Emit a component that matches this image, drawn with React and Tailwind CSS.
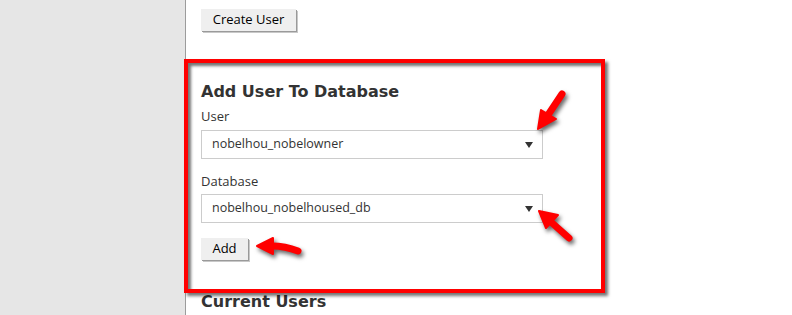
import React from "react";

const font = { fontFamily: '"Open Sans", "DejaVu Sans", sans-serif' };
const headFont = { fontFamily: '"DejaVu Sans", Verdana, sans-serif' };

const Select = ({ value }) => (
  <div className="flex h-[29px] w-[342px] items-center justify-between border border-[#cccccc] bg-white pl-[10px] pr-[9px] text-[12.5px] text-[#333]">
    <span>{value}</span>
    <svg width="8" height="6" viewBox="0 0 8 6" className="mt-[1px]">
      <path d="M0 0h8L4 6z" fill="#333" />
    </svg>
  </div>
);

const Button = ({ children, className = "" }) => (
  <button
    className={`h-[22px] border-0 bg-[#efefef] text-[13px] text-black shadow-[1px_1px_0_#9a9a9a,2px_2px_0_#c8c8c8] ${className}`}
  >
    {children}
  </button>
);

// annotation arrows drawn over the page
const Arrows = () => (
  <svg
    width="792"
    height="315"
    className="pointer-events-none absolute left-0 top-0 drop-shadow-[2px_3px_2px_rgba(0,0,0,0.6)]"
  >
    <g fill="#ff0000" stroke="#ff0000" strokeLinecap="round" strokeLinejoin="round">
      {/* user select */}
      <path d="M562 94 L548 115" strokeWidth="7" fill="none" />
      <path d="M538 129 L541 110 L556 119 Z" strokeWidth="2" />
      {/* database select */}
      <path d="M569 238 L551 222" strokeWidth="7" fill="none" />
      <path d="M539 211 L558 215 L546 228 Z" strokeWidth="2" />
      {/* add button */}
      <path d="M298 251 Q285 246 272 246" strokeWidth="7" fill="none" />
      <path d="M257 246 L273 238 L273 254 Z" strokeWidth="2" />
    </g>
  </svg>
);

export default function App() {
  return (
    <div className="relative flex h-[315px] w-[792px] overflow-hidden bg-white" style={font}>
      <div className="w-[186px] shrink-0 border-r border-[#9c9c9c] bg-[#e6e6e6]" />

      <div className="flex flex-col pl-[15px] pt-[9px] text-[#333]">
        <Button className="w-[95px]">Create User</Button>

        <h2 className="mt-[50px] text-[16px] font-bold leading-[22px] text-[#333]" style={headFont}>
          Add User To Database
        </h2>
        <label className="mt-[4px] text-[13px] leading-[18px]">User</label>
        <div className="mt-[5px]">
          <Select value="nobelhou_nobelowner" />
        </div>

        <label className="mt-[13px] text-[13px] leading-[18px]">Database</label>
        <div className="mt-[4px]">
          <Select value="nobelhou_nobelhoused_db" />
        </div>

        <Button className="mt-[15px] w-[47px]">Add</Button>

        <h2 className="mt-[31px] text-[16px] font-bold leading-[22px] text-[#333]" style={headFont}>
          Current Users
        </h2>
      </div>

      {/* red highlight box */}
      <div className="pointer-events-none absolute left-[184px] top-[59px] h-[234px] w-[421px] border-4 border-[#ff0000] shadow-[3px_3px_3px_rgba(0,0,0,0.55),inset_3px_3px_3px_rgba(0,0,0,0.55)]" />

      <Arrows />
    </div>
  );
}
